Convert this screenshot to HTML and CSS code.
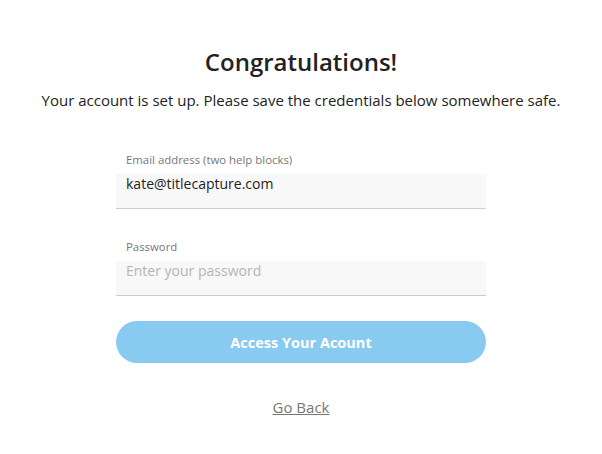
FILE: index.html
```html
<!DOCTYPE html>
<html lang="en">
  <head>
    <meta charset="UTF-8" />
    <meta name="viewport" content="width=device-width, initial-scale=1.0" />
    <title>Account Ready</title>
    <link rel="stylesheet" href="styles.css">
  </head>
  <body>
    <div class="page">
      <h1>Congratulations!</h1>
      <p class="intro">Your account is set up. Please save the credentials below somewhere safe.</p>

      <form class="creds" action="#">
        <div class="field">
          <label for="email">Email address (two help blocks)</label>
          <input type="text" id="email" value="kate@titlecapture.com" />
        </div>
        <div class="field">
          <label for="password">Password</label>
          <input type="password" id="password" placeholder="Enter your password" autofocus />
        </div>
        <button type="button">Access Your Acount</button>
      </form>

      <a class="back" href="#">Go Back</a>
    </div>
  </body>
</html>
```

FILE: styles.css
```css
body {
  font-family: "Open Sans", "Noto Sans", sans-serif;
  margin: 0;
  background-color: #fff;
  color: #222;
}
.page {
  display: flex;
  flex-direction: column;
  align-items: center;
  padding-top: 46px;
}
h1 {
  margin: 0;
  font-size: 24px;
  font-weight: 600;
  line-height: 32px;
  color: #222;
}
.intro {
  margin: 12px 0 0;
  font-size: 15px;
  line-height: 20px;
  color: #222;
}
.creds {
  width: 370px;
  margin-top: 43px;
  display: flex;
  flex-direction: column;
}
.field {
  margin-bottom: 31px;
}
.field:last-of-type {
  margin-bottom: 25px;
}
label {
  display: block;
  padding-left: 10px;
  font-size: 11.4px;
  line-height: 14px;
  color: #777;
  margin-bottom: 7px;
}
input {
  display: block;
  box-sizing: border-box;
  width: 100%;
  height: 35px;
  padding: 0 10px 15px;
  border: none;
  border-bottom: 1px solid #c6ced6;
  background-color: #f8f8f8;
  font-family: inherit;
  font-size: 14px;
  color: #222;
  outline: none;
}
input::placeholder {
  color: #b5b5b5;
}
button {
  height: 42px;
  border: none;
  border-radius: 21px;
  background-color: #89caf0;
  color: #fff;
  font-family: inherit;
  font-size: 14.5px;
  font-weight: 700;
  cursor: pointer;
}
.back {
  margin-top: 34px;
  font-size: 15px;
  color: #777;
}
```
